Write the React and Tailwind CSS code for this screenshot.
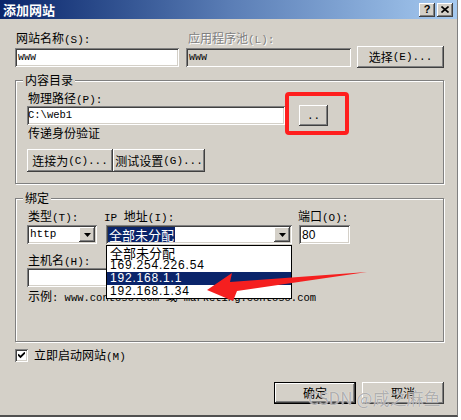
const raised =
  "bg-[#d4d0c8] shadow-[inset_-1px_-1px_#404040,inset_1px_1px_#ffffff,inset_-2px_-2px_#808080,inset_2px_2px_#d4d0c8]";
const sunken =
  "shadow-[inset_1px_1px_#808080,inset_-1px_-1px_#ffffff,inset_2px_2px_#404040,inset_-2px_-2px_#d4d0c8]";
const mono = "font-[family-name:'Liberation_Mono',monospace]";
const sans = "font-[family-name:'Liberation_Sans',sans-serif]";

const Label = ({ text, hot, className = "" }) => (
  <div className={`h-[14px] text-[12px] leading-[14px] whitespace-nowrap ${className}`}>
    {text}
    <span className={`${mono} text-[11px]`}>{hot}</span>
  </div>
);

const Button = ({ text, hot, className = "" }) => (
  <div className={`flex items-center justify-center text-[12px] leading-[14px] ${raised} ${className}`}>
    {text}
    <span className={`${mono} text-[11px]`}>{hot}</span>
  </div>
);

const Input = ({ value, className = "", textClass = "", disabled = false }) => (
  <div
    className={`flex items-center h-[19px] pl-[3px] ${disabled ? "bg-[#d4d0c8]" : "bg-white"} ${sunken} ${className}`}
  >
    <span className={textClass}>{value}</span>
  </div>
);

const DropArrow = () => (
  <div className={`w-[16px] h-[15px] flex items-center justify-center ${raised}`}>
    <svg width="7" height="4" viewBox="0 0 7 4">
      <path d="M0 0h7L3.5 4z" fill="#000" />
    </svg>
  </div>
);

const ipList = ["169.254.226.54", "192.168.1.1", "192.168.1.34"];

export default function App() {
  return (
    <div className="w-[461px] h-[420px] bg-white overflow-hidden font-[family-name:'Noto_Sans_CJK_SC',sans-serif] text-black">
      <div className="relative w-[458px] h-[417px] bg-[#d4d0c8] border-r border-b-2 border-r-[#808080] border-b-[#505050]">
        {/* title bar */}
        <div className="h-[19px] flex items-center justify-between pl-[3px] pr-[4px] bg-linear-to-r from-[#0a246a] via-[#5a7db5] to-[#a6caf0]">
          <span className="text-white text-[13px] font-bold leading-none">添加网站</span>
          <div className="flex gap-[2px]">
            <div className={`w-[16px] h-[14px] flex items-center justify-center ${raised}`}>
              <span className={`text-[11px] font-bold leading-none ${sans}`}>?</span>
            </div>
            <div className={`w-[16px] h-[14px] flex items-center justify-center ${raised}`}>
              <svg width="8" height="7" viewBox="0 0 8 7">
                <path d="M0.5 0.5L7.5 6.5M7.5 0.5L0.5 6.5" stroke="#000" strokeWidth="1.6" />
              </svg>
            </div>
          </div>
        </div>

        <div className="pl-[15px] w-[444px]">
          {/* site name row */}
          <div className="flex items-end mt-[12px]">
            <div className="w-[164px]">
              <Label text="网站名称" hot="(S):" className="ml-[1px]" />
              <Input value="www" className="mt-[3px]" textClass={`${mono} text-[10px]`} />
            </div>
            <div className="w-[165px] ml-[7px]">
              <Label
                text="应用程序池"
                hot="(L):"
                className="ml-[2px] text-[#808080] [text-shadow:1px_1px_0_#ffffff]"
              />
              <Input value="www" disabled className="mt-[3px]" textClass={`${mono} text-[10px]`} />
            </div>
            <Button text="选择" hot="(E)..." className="w-[87px] h-[22px] ml-[6px] -mb-[1px]" />
          </div>

          {/* content directory */}
          <fieldset className="mt-[6px] border border-[#808080] shadow-[inset_1px_1px_#ffffff,1px_1px_#ffffff]">
            <legend className="ml-[7px] px-[2px] h-[14px] text-[12px] leading-[14px] bg-[#d4d0c8]">内容目录</legend>
            <div className="pl-[11px] pt-[4px] pb-[11px]">
              <Label text="物理路径" hot="(P):" className="ml-[1px]" />
              <div className="flex items-center h-[21px]">
                <Input value="C:\web1" className="w-[258px]" textClass={`${mono} text-[10.5px] -ml-[2px]`} />
                <Button text="" hot=".." className="w-[29px] h-[21px] ml-[14px]" />
              </div>
              <Label text="传递身份验证" className="ml-[1px]" />
              <div className="flex mt-[9px]">
                <Button text="连接为" hot="(C)..." className="w-[86px] h-[23px]" />
                <Button text="测试设置" hot="(G)..." className="w-[92px] h-[23px]" />
              </div>
            </div>
          </fieldset>

          {/* bindings */}
          <fieldset className="mt-[7px] border border-[#808080] shadow-[inset_1px_1px_#ffffff,1px_1px_#ffffff]">
            <legend className="ml-[7px] px-[2px] h-[14px] text-[12px] leading-[14px] bg-[#d4d0c8]">绑定</legend>
            <div className="pl-[11px] pt-[4px] pb-[38px]">
              <div className="flex">
                <div className="w-[70px]">
                  <Label text="类型" hot="(T):" className="ml-[1px]" />
                  <div className={`mt-[2px] h-[19px] flex items-center justify-between pl-[3px] pr-[2px] bg-white ${sunken}`}>
                    <span className={`${mono} text-[11px]`}>http</span>
                    <DropArrow />
                  </div>
                </div>
                <div className="w-[186px] ml-[9px]">
                  <div className="h-[14px] text-[12px] leading-[14px] whitespace-nowrap -ml-[2px]">
                    <span className={`${mono} text-[11px]`}>IP </span>
                    地址
                    <span className={`${mono} text-[11px]`}>(I):</span>
                  </div>
                  <div className={`mt-[2px] h-[19px] flex items-center justify-between pl-[2px] pr-[2px] bg-white ${sunken}`}>
                    <span className="bg-[#0a246a] text-white text-[13px] leading-[15px] px-[1px]">全部未分配</span>
                    <DropArrow />
                  </div>
                </div>
                <div className="w-[51px] ml-[7px]">
                  <Label text="端口" hot="(O):" className="-ml-[1px]" />
                  <Input value="80" className="mt-[2px]" textClass={`${sans} text-[12px]`} />
                </div>
              </div>

              <Label text="主机名" hot="(H):" className="mt-[9px] ml-[1px]" />
              <Input value="" className="mt-[1px] w-[264px]" />
              <div className="h-[14px] mt-[2px] ml-[1px] text-[12px] leading-[14px] whitespace-nowrap">
                示例
                <span className={`${mono} text-[10.5px]`}>: www.contoso.com </span>
                或
                <span className={`${mono} text-[10.5px]`}> marketing.contoso.com</span>
              </div>
            </div>
          </fieldset>

          {/* start site checkbox */}
          <div className="flex items-center mt-[6px] h-[14px]">
            <div className={`w-[13px] h-[13px] bg-white flex items-center justify-center ${sunken}`}>
              <svg width="7" height="7" viewBox="0 0 7 7">
                <path d="M0 2.5L2.5 5L7 0.5" stroke="#000" strokeWidth="1.8" fill="none" />
              </svg>
            </div>
            <Label text="立即启动网站" hot="(M)" className="ml-[6px]" />
          </div>

          {/* dialog buttons */}
          <div className="flex justify-end gap-[6px] mt-[20px]">
            <div className="border border-black">
              <Button text="确定" className="w-[80px] h-[20px]" />
            </div>
            <Button text="取消" className="w-[82px] h-[22px]" />
          </div>
        </div>

        {/* open IP dropdown list */}
        <div className="absolute left-[106px] top-[245px] w-[186px] bg-white border border-black text-[13px] leading-[13px]">
          <div className="pl-[3px] h-[13px]">全部未分配</div>
          {ipList.map((ip) => (
            <div
              key={ip}
              className={`pl-[3px] h-[13px] ${sans} text-[12px] tracking-[0.8px] ${
                ip === "192.168.1.1" ? "bg-[#0a246a] text-white" : ""
              }`}
            >
              {ip}
            </div>
          ))}
        </div>

        {/* red highlight box */}
        <div className="absolute left-[285px] top-[92px] w-[64px] h-[43px] border-[4px] border-[#ff1e1e] rounded-[4px]" />

        {/* red arrow */}
        <svg className="absolute left-[200px] top-[265px]" width="170" height="40" viewBox="0 0 170 40">
          <path d="M7 25L32 8L30 17L167 7L37 26L33 36Z" fill="#f51f1f" />
        </svg>

        {/* watermark */}
        <div className="absolute left-[308px] top-[388px] text-[17px] leading-[20px] text-[#9b9b9b]/80 [text-shadow:0_0_1px_#ffffff] whitespace-nowrap">
          CSDN @咸之麻鱼
        </div>
      </div>
    </div>
  );
}
